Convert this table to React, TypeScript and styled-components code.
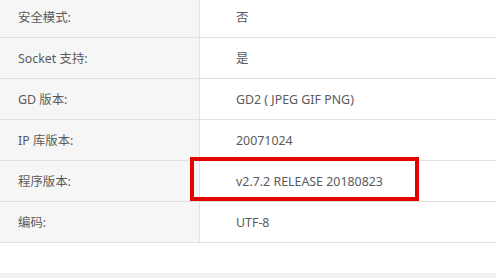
import React from "react";
import styled, { createGlobalStyle } from "styled-components";

const Global = createGlobalStyle`
  html, body { margin: 0; padding: 0; background: #ffffff; }
  body { font-family: "Noto Sans", "Noto Sans CJK SC", sans-serif; overflow: hidden; }
`;

const Page = styled.div`
  position: relative;
  width: 496px;
  height: 278px;
  overflow: hidden;
  background: #ffffff;
`;

const Table = styled.div`
  display: grid;
  grid-template-columns: 200px 1fr;
  margin-top: -3px;
`;

const Row = styled.div`
  display: contents;
`;

const Cell = styled.div<{ $label?: boolean }>`
  box-sizing: border-box;
  height: 41px;
  display: flex;
  align-items: center;
  border-bottom: 1px solid #e2e2e2;
  font-size: 12.4px;
  color: #5a5a5a;
  white-space: nowrap;
  padding-left: ${(p) => (p.$label ? "18px" : "36px")};
  background: ${(p) => (p.$label ? "#f6f6f6" : "#ffffff")};
  border-right: ${(p) => (p.$label ? "1px solid #e2e2e2" : "none")};
`;

const Spacer = styled.div`
  height: 30px;
`;

const Footer = styled.div`
  height: 10px;
  background: #f2f2f2;
  border-top: 1px solid #ececec;
`;

const Highlight = styled.div`
  position: absolute;
  left: 190px;
  top: 157px;
  width: 229px;
  height: 44px;
  box-sizing: border-box;
  border: 4.5px solid #e50000;
  pointer-events: none;
`;

const rows: [string, string][] = [
  ["安全模式:", "否"],
  ["Socket 支持:", "是"],
  ["GD 版本:", "GD2 ( JPEG GIF PNG)"],
  ["IP 库版本:", "20071024"],
  ["程序版本:", "v2.7.2 RELEASE 20180823"],
  ["编码:", "UTF-8"],
];

export default function App() {
  return (
    <Page>
      <Global />
      <Table>
        {rows.map(([k, v]) => (
          <Row key={k}>
            <Cell $label>{k}</Cell>
            <Cell>{v}</Cell>
          </Row>
        ))}
      </Table>
      <Spacer />
      <Footer />
      <Highlight />
    </Page>
  );
}
